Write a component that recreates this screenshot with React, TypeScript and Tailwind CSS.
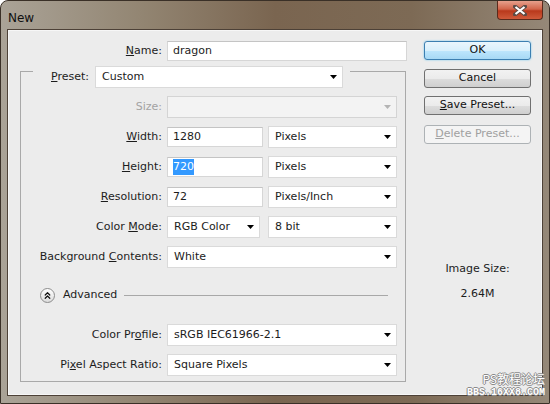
import { ChevronsUp } from "lucide-react"
import type { ReactNode } from "react"

const FONT = "font-['DejaVu_Sans',sans-serif]"

function Arrow({ disabled = false }: { disabled?: boolean }) {
    return (
        <svg width="7" height="4" viewBox="0 0 7 4" className="ml-auto mr-[5px] shrink-0">
            <path d="M0 0 H7 L3.5 4 Z" fill={disabled ? "#b4b4b4" : "#000"} />
        </svg>
    )
}

function TextBox({ w, children }: { w: string; children?: ReactNode }) {
    return (
        <div className={`flex h-[20px] items-center border border-[#d6d6d6] border-t-[#c4c4c4] bg-white pl-[5px] ${w}`}>
            {children}
        </div>
    )
}

function Select({ w, value, disabled = false }: { w: string; value?: string; disabled?: boolean }) {
    return (
        <div
            className={`flex h-[22px] items-center border pl-[6px] ${w} ${
                disabled ? "border-[#d4d4d4] bg-[#f3f3f3]" : "border-[#dadada] bg-white"
            }`}
        >
            <span className="whitespace-nowrap">{value}</span>
            <Arrow disabled={disabled} />
        </div>
    )
}

function Row({ label, disabled = false, children }: { label: ReactNode; disabled?: boolean; children: ReactNode }) {
    return (
        <div className="flex h-[30px] items-center">
            <div className={`w-[141px] whitespace-nowrap text-right ${disabled ? "text-[#a3a3a3]" : ""}`}>{label}</div>
            <div className="ml-[5px] flex items-center gap-[5px]">{children}</div>
        </div>
    )
}

function Button({ children, primary = false, disabled = false, className = "" }: { children: ReactNode; primary?: boolean; disabled?: boolean; className?: string }) {
    let look = "border-[#707070] bg-[linear-gradient(#f2f2f2,#ebebeb_50%,#dddddd_51%,#cfcfcf)] text-[#111]"
    if (primary) look = "border-[#3c7fb1] bg-[linear-gradient(#eaf6fd,#d9f0fc_50%,#bee6fd_51%,#a7d9f5)] shadow-[0_0_2px_#6cc4f0] text-[#111]"
    if (disabled) look = "border-[#adb2b5] bg-[#f4f4f4] text-[#a0a0a0]"
    return (
        <div className={`flex h-[19px] w-[107px] items-center justify-center rounded-[3px] border ${look} ${className}`}>
            {children}
        </div>
    )
}

export default function App() {
    return (
        <div className={`${FONT} relative h-[404px] w-[550px] overflow-hidden rounded-t-[8px] border border-[#3a3027] bg-[linear-gradient(90deg,#aaa397,#938673_25%,#7a6550_50%,#7d6a55_75%,#958878)] px-[6px] text-[11px] text-[#1c1c1c]`}>
            {/* TITLE BAR */}
            <div className="flex h-[28px] items-start">
                <span className="ml-[1px] mt-[8px] text-[12px] text-[#101010]">New</span>
                <div className="ml-auto flex h-[19px] w-[46px] items-center justify-center rounded-b-[4px] border border-t-0 border-[#5a2a1c] bg-[linear-gradient(#e7a08c,#d2654a_45%,#b9391c_55%,#cf5a3a)]">
                    <svg width="14" height="11" viewBox="0 0 14 11">
                        <path d="M2 1.5 L12 9.5 M12 1.5 L2 9.5" stroke="#5b4b45" strokeWidth="4" strokeLinecap="square" />
                        <path d="M2.5 2 L11.5 9 M11.5 2 L2.5 9" stroke="#fff" strokeWidth="2.2" />
                    </svg>
                </div>
            </div>

            {/* CONTENT */}
            <div className="flex h-[367px] border border-[#4d4137] bg-[#ececec] shadow-[inset_0_0_0_1px_#f7f7f7]">
                {/* LEFT */}
                <div className="w-[416px] shrink-0">
                    <div className="mt-[11px] flex h-[20px] items-center">
                        <div className="w-[154px] text-right"><u>N</u>ame:</div>
                        <div className="ml-[5px]">
                            <TextBox w="w-[240px]">dragon</TextBox>
                        </div>
                    </div>

                    {/* PRESET GROUP */}
                    <div className="ml-[12px] mt-[10px] w-[386px] border border-[#a9a9a9] pb-[1px]">
                        <div className="-mt-[6px] ml-[12px] flex w-fit items-center bg-[#ececec] pl-[18px] pr-[7px]">
                            <span><u>P</u>reset:</span>
                            <div className="ml-[6px]">
                                <Select w="w-[248px]" value="Custom" />
                            </div>
                        </div>

                        <div className="mt-[4px]">
                            <Row label="Size:" disabled>
                                <Select w="w-[230px]" disabled />
                            </Row>
                            <Row label={<><u>W</u>idth:</>}>
                                <TextBox w="w-[96px]">1280</TextBox>
                                <Select w="w-[129px]" value="Pixels" />
                            </Row>
                            <Row label={<><u>H</u>eight:</>}>
                                <TextBox w="w-[96px]">
                                    <span className="bg-[#3399ff] text-white">720</span>
                                </TextBox>
                                <Select w="w-[129px]" value="Pixels" />
                            </Row>
                            <Row label={<><u>R</u>esolution:</>}>
                                <TextBox w="w-[96px]">72</TextBox>
                                <Select w="w-[129px]" value="Pixels/Inch" />
                            </Row>
                            <Row label={<>Color <u>M</u>ode:</>}>
                                <Select w="w-[93px]" value="RGB Color" />
                                <div className="ml-[3px]">
                                    <Select w="w-[129px]" value="8 bit" />
                                </div>
                            </Row>
                            <Row label={<>Background <u>C</u>ontents:</>}>
                                <Select w="w-[230px]" value="White" />
                            </Row>
                        </div>

                        {/* ADVANCED */}
                        <div className="mt-[8px] flex h-[30px] items-center pl-[19px] pr-[17px]">
                            <div className="flex h-[15px] w-[15px] items-center justify-center rounded-full border border-[#8c8c8c] bg-[linear-gradient(#ffffff,#dcdcdc)]">
                                <ChevronsUp size={11} strokeWidth={2.6} color="#111" />
                            </div>
                            <span className="ml-[8px]">Advanced</span>
                            <div className="ml-[7px] h-px flex-1 bg-[#a8a8a8]" />
                        </div>

                        <div className="mt-[10px]">
                            <Row label={<>Color Pr<u>o</u>file:</>}>
                                <Select w="w-[230px]" value="sRGB IEC61966-2.1" />
                            </Row>
                            <Row label={<>Pi<u>x</u>el Aspect Ratio:</>}>
                                <Select w="w-[230px]" value="Square Pixels" />
                            </Row>
                        </div>
                    </div>
                </div>

                {/* RIGHT BUTTONS */}
                <div className="flex w-[107px] flex-col">
                    <Button primary className="mt-[11px]">OK</Button>
                    <Button className="mt-[9px]">Cancel</Button>
                    <Button className="mt-[8px]"><span><u>S</u>ave Preset...</span></Button>
                    <Button disabled className="mt-[10px]"><span><u>D</u>elete Preset...</span></Button>
                    <div className="mt-[117px] text-center">Image Size:</div>
                    <div className="mt-[8px] text-center">2.64M</div>
                </div>
            </div>

            {/* WATERMARK */}
            <div className="absolute bottom-[5px] right-[4px] flex flex-col items-end text-white [text-shadow:1px_0_#8a8a8a,-1px_0_#8a8a8a,0_1px_#8a8a8a,0_-1px_#8a8a8a]">
                <span className="block font-['Noto_Sans_CJK_SC',sans-serif] text-[12px] leading-[12px]">PS教程论坛</span>
                <span className="mt-[3px] block font-['Liberation_Mono',monospace] text-[10px] font-bold leading-[10px]">BBS.16XX8.COM</span>
            </div>
        </div>
    )
}
